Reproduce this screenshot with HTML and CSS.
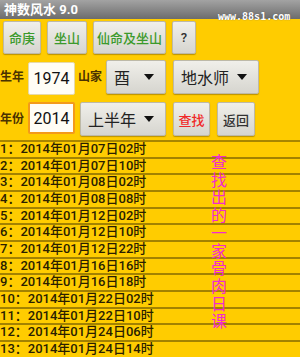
FILE: index.html
```html
<!DOCTYPE html>
<html>
<head>
<meta charset="utf-8">
<link rel="stylesheet" href="styles.css">
</head>
<body>
<div class="titlebar"><span class="title">神数风水 9.0</span></div>
<div class="watermark">www.88s1.com</div>
<div class="row row1">
  <div class="btn green w38">命庚</div>
  <div class="btn green w40">坐山</div>
  <div class="btn green w73">仙命及坐山</div>
  <div class="btn dark w24">?</div>
</div>
<div class="row row2">
  <div class="label">生年</div>
  <div class="input i1">1974</div>
  <div class="label l2">山家</div>
  <div class="spinner s1"><span>酉</span><span class="tri"></span></div>
  <div class="spinner s2"><span>地水师</span><span class="tri"></span></div>
</div>
<div class="row row3">
  <div class="label">年份</div>
  <div class="input i2 focus">2014</div>
  <div class="spinner s3"><span>上半年</span><span class="tri"></span></div>
  <div class="btn red w37">查找</div>
  <div class="btn dark w38b">返回</div>
</div>
<div class="list">
  <div class="item">1：2014年01月07日02时</div>
  <div class="item">2：2014年01月07日10时</div>
  <div class="item">3：2014年01月08日02时</div>
  <div class="item">4：2014年01月08日08时</div>
  <div class="item">5：2014年01月12日02时</div>
  <div class="item">6：2014年01月12日10时</div>
  <div class="item">7：2014年01月12日22时</div>
  <div class="item">8：2014年01月16日16时</div>
  <div class="item">9：2014年01月16日18时</div>
  <div class="item">10：2014年01月22日02时</div>
  <div class="item">11：2014年01月22日10时</div>
  <div class="item">12：2014年01月24日06时</div>
  <div class="item">13：2014年01月24日14时</div>
  <div class="vtext">查找出的一家骨肉日课</div>
</div>
</body>
</html>
```
FILE: styles.css
```css
* { box-sizing: border-box; }
html, body { margin: 0; padding: 0; }
body {
  width: 300px;
  height: 357px;
  overflow: hidden;
  background: #ffcc00;
  font-family: Roboto, "Noto Sans CJK SC", sans-serif;
  position: relative;
}
.titlebar {
  height: 19px;
  background: linear-gradient(#a3a3a3, #6c6c6c);
  padding-left: 4px;
  display: flex;
  align-items: center;
}
.title {
  color: #fff;
  font-size: 13px;
  font-weight: bold;
  line-height: 19px;
}
.watermark {
  position: absolute;
  left: 218px;
  top: 11px;
  font-family: "DejaVu Sans Mono", monospace;
  font-size: 10px;
  font-weight: bold;
  color: #fff;
  line-height: 11px;
  text-shadow: 0 0 1px #555;
}
.row { display: flex; align-items: flex-start; }
.row1 { margin-top: 2px; padding-left: 3px; gap: 6px; height: 33px; }
.row2 { margin-top: 6px; height: 34px; }
.row3 { margin-top: 8px; height: 34px; }
.btn {
  height: 33px;
  display: flex;
  align-items: center;
  justify-content: center;
  background: linear-gradient(#f0efea, #d6d5cf);
  border: 1px solid #bdb9a8;
  border-radius: 2px;
  box-shadow: 0 1px 1px rgba(120, 90, 0, 0.5);
  font-size: 13px;
  font-weight: 500;
}
.green { color: #3c9a2c; }
.red { color: #f02828; }
.dark { color: #333; }
.w38 { width: 38px; }
.w40 { width: 40px; }
.w73 { width: 73px; }
.w24 { width: 24px; }
.row3 .btn { height: 34px; }
.w37 { width: 37px; margin-left: 7px; }
.w38b { width: 38px; margin-left: 7px; }
.label {
  width: 24px;
  font-size: 12px;
  font-weight: bold;
  color: #4a3200;
  align-self: center;
  line-height: 14px;
  white-space: nowrap;
}
.l2 { margin-left: 3px; }
.input {
  margin-left: 4px;
  width: 47px;
  height: 33px;
  margin-top: 2px;
  background: #fffdf5;
  border: 1px solid #e6d9a8;
  border-radius: 2px;
  font-size: 16px;
  color: #111;
  display: flex;
  align-items: center;
  justify-content: center;
}
.focus { border: 2px solid #f39a1a; margin-top: 0; height: 32px; }
.spinner {
  height: 34px;
  background: linear-gradient(#f0efea, #d6d5cf);
  border: 1px solid #bdb9a8;
  border-radius: 2px;
  box-shadow: 0 1px 1px rgba(120, 90, 0, 0.5);
  display: flex;
  align-items: center;
  justify-content: space-between;
  padding: 0 11px 0 7px;
  font-size: 16px;
  color: #222;
}
.tri {
  width: 0; height: 0;
  border-left: 5px solid transparent;
  border-right: 5px solid transparent;
  border-top: 6px solid #111;
}
.s1 { margin-left: 4px; width: 60px; }
.s2 { margin-left: 7px; width: 86px; }
.s3 { margin-left: 5px; width: 86px; }
.list {
  position: relative;
  margin-top: 4px;
  border-top: 2px solid #a88600;
}
.item {
  height: 16.67px;
  border-bottom: 2px solid #a38200;
  font-size: 13px;
  font-weight: 500;
  line-height: 14.6px;
  color: #2a1e00;
  white-space: nowrap;
}
.vtext {
  position: absolute;
  left: 211px;
  top: 11px;
  width: 16px;
  font-family: "Noto Sans CJK SC", sans-serif;
  font-size: 16px;
  line-height: 17.7px;
  color: #f22ad0;
  word-break: break-all;
  text-align: center;
}
```
